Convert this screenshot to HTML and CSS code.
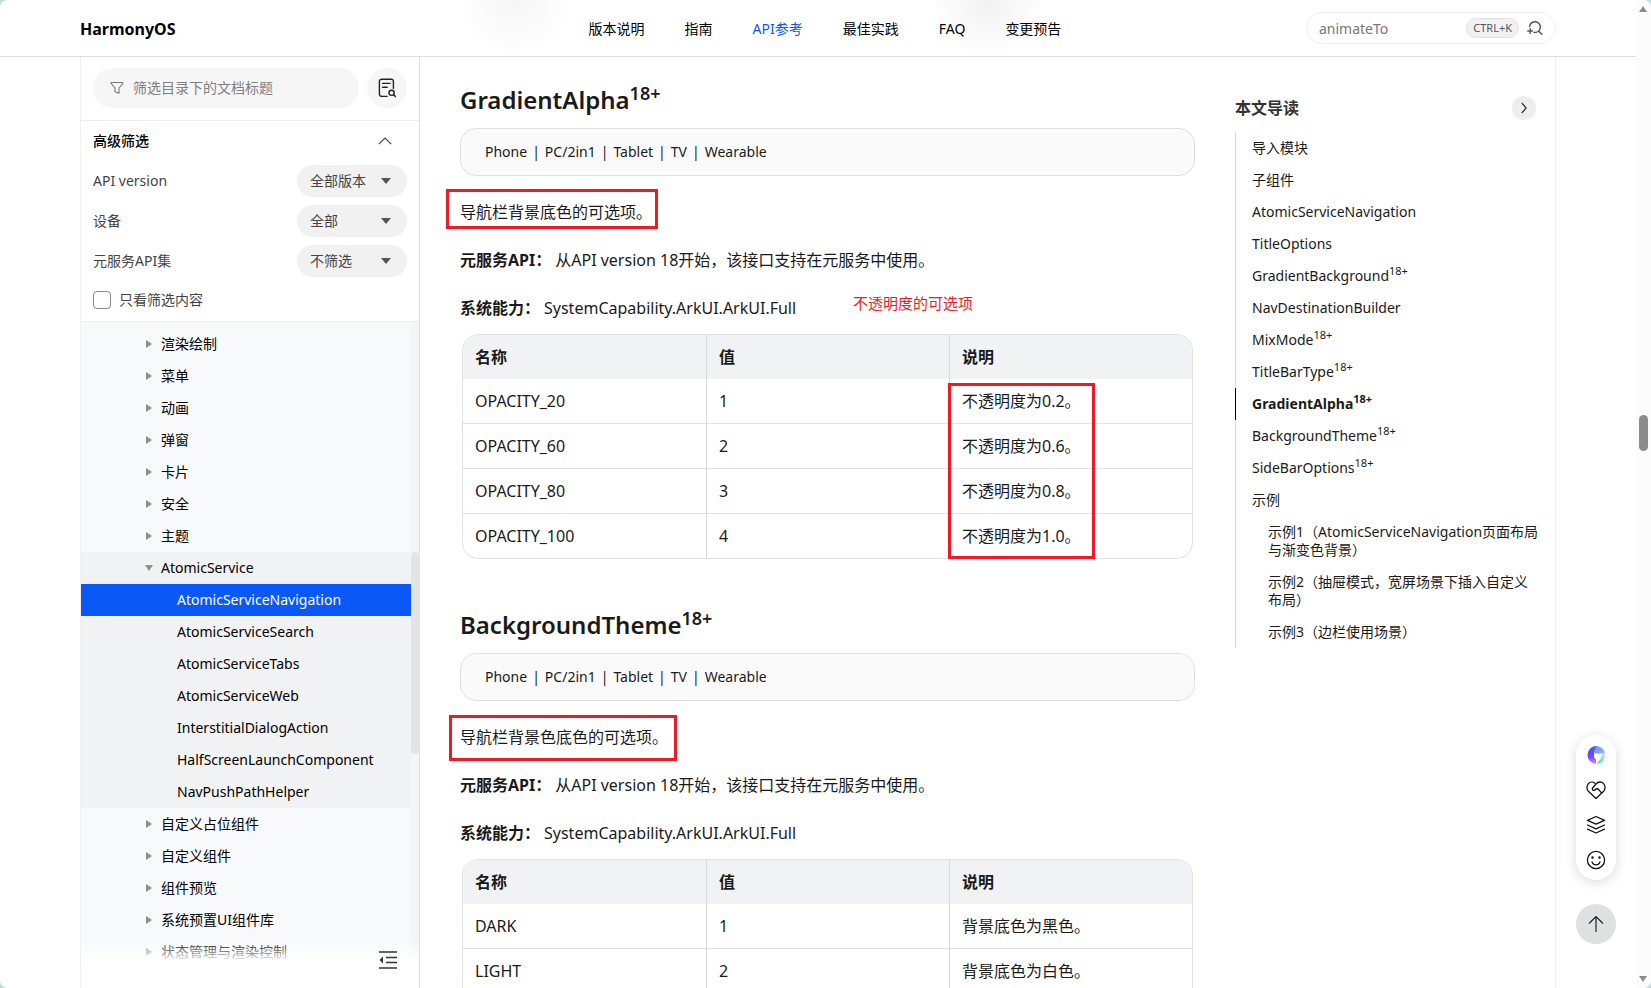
FILE: index.html
```html
<!DOCTYPE html>
<html lang="zh-CN">
<head>
  <meta charset="UTF-8">
  <title>AtomicServiceNavigation - HarmonyOS</title>
  <link rel="stylesheet" href="styles.css">
</head>
<body>
  <div class="window">
    <div class="page">
      <header class="header">
        <a class="logo" href="#">HarmonyOS</a>
        <nav class="nav">
          <a href="#">版本说明</a>
          <a href="#">指南</a>
          <a class="active" href="#">API参考</a>
          <a href="#">最佳实践</a>
          <a href="#">FAQ</a>
          <a href="#">变更预告</a>
        </nav>
        <form class="search">
          <input type="text" placeholder="animateTo" aria-label="搜索">
          <kbd>CTRL+K</kbd>
          <button type="button" aria-label="搜索">
            <svg width="16" height="16" viewBox="0 0 16 16" fill="none" stroke="#555" stroke-width="1.4" stroke-linecap="round"><path d="M2.6 6.6A5.4 5.4 0 1 1 7 12.4M11.8 11.2l3 3"/><path d="M3.2 8.6v4.8M.8 11h4.8"/></svg>
          </button>
        </form>
      </header>

      <div class="body">
        <aside class="sidebar">
          <div class="filter">
            <label class="filter-box">
              <svg width="14" height="14" viewBox="0 0 14 14" fill="none" stroke="#777" stroke-width="1.1" stroke-linejoin="round"><path d="M1.2 1.5h11.6v1L9 7v5.2l-4-1.4V7L1.2 2.5z"/></svg>
              <input type="text" placeholder="筛选目录下的文档标题" aria-label="筛选目录下的文档标题">
            </label>
            <button class="round-btn" type="button" aria-label="目录内搜索">
              <svg width="20" height="20" viewBox="0 0 20 20" fill="none" stroke="#222" stroke-width="1.4" stroke-linecap="round" stroke-linejoin="round"><path d="M10 18.4H4.6a2.2 2.2 0 0 1-2.2-2.2V3.4a2.2 2.2 0 0 1 2.2-2.2h9.6a2.2 2.2 0 0 1 2.2 2.2v7M5.6 5.4h7.4M5.6 9.2h4.6"/><circle cx="14.6" cy="14.8" r="2.6"/><path d="M16.6 16.8l1.8 1.8"/></svg>
            </button>
          </div>

          <div class="options">
            <div class="options-title">
              <b>高级筛选</b>
              <button type="button" aria-label="收起">
                <svg width="14" height="8" viewBox="0 0 14 8" fill="none" stroke="#444" stroke-width="1.2"><path d="M.8 7.2L7 1l6.2 6.2"/></svg>
              </button>
            </div>
            <div class="option">
              <label for="version">API version</label>
              <span class="select"><select id="version"><option>全部版本</option></select></span>
            </div>
            <div class="option">
              <label for="device">设备</label>
              <span class="select"><select id="device"><option>全部</option></select></span>
            </div>
            <div class="option">
              <label for="apiset">元服务API集</label>
              <span class="select"><select id="apiset"><option>不筛选</option></select></span>
            </div>
            <label class="only"><input type="checkbox">只看筛选内容</label>
          </div>

          <div class="tree">
            <ul>
              <li><a href="#">渲染绘制</a></li>
              <li><a href="#">菜单</a></li>
              <li><a href="#">动画</a></li>
              <li><a href="#">弹窗</a></li>
              <li><a href="#">卡片</a></li>
              <li><a href="#">安全</a></li>
              <li><a href="#">主题</a></li>
              <li class="open">
                <a href="#">AtomicService</a>
                <ul>
                  <li><a class="current" href="#">AtomicServiceNavigation</a></li>
                  <li><a href="#">AtomicServiceSearch</a></li>
                  <li><a href="#">AtomicServiceTabs</a></li>
                  <li><a href="#">AtomicServiceWeb</a></li>
                  <li><a href="#">InterstitialDialogAction</a></li>
                  <li><a href="#">HalfScreenLaunchComponent</a></li>
                  <li><a href="#">NavPushPathHelper</a></li>
                </ul>
              </li>
              <li><a href="#">自定义占位组件</a></li>
              <li><a href="#">自定义组件</a></li>
              <li><a href="#">组件预览</a></li>
              <li><a href="#">系统预置UI组件库</a></li>
              <li><a href="#">状态管理与渲染控制</a></li>
            </ul>
            <div class="tree-bar"><i></i></div>
          </div>
          <div class="tree-foot">
            <button type="button" aria-label="收起目录">
              <svg width="18" height="18" viewBox="0 0 18 18" fill="none" stroke="#333" stroke-width="1.4"><path d="M0 1h18M7 6.5h11M7 11.5h11M0 17h18"/><path d="M4 5.5v7L.5 9z" fill="#333" stroke="none"/></svg>
            </button>
          </div>
        </aside>

        <main class="content">
          <section>
            <h2>GradientAlpha<sup>18+</sup></h2>
            <div class="devices"><span>Phone</span><span>PC/2in1</span><span>Tablet</span><span>TV</span><span>Wearable</span></div>
            <p>导航栏背景底色的可选项。<i class="mark mark-alpha"></i></p>
            <p><b>元服务API：</b>从API version 18开始，该接口支持在元服务中使用。</p>
            <p><b>系统能力：</b>SystemCapability.ArkUI.ArkUI.Full<span class="note">不透明度的可选项</span></p>
            <div class="table">
              <table>
                <thead>
                  <tr><th>名称</th><th>值</th><th>说明</th></tr>
                </thead>
                <tbody>
                  <tr><td>OPACITY_20</td><td>1</td><td>不透明度为0.2。</td></tr>
                  <tr><td>OPACITY_60</td><td>2</td><td>不透明度为0.6。</td></tr>
                  <tr><td>OPACITY_80</td><td>3</td><td>不透明度为0.8。</td></tr>
                  <tr><td>OPACITY_100</td><td>4</td><td>不透明度为1.0。</td></tr>
                </tbody>
              </table>
              <i class="mark mark-column"></i>
            </div>
          </section>

          <section>
            <h2>BackgroundTheme<sup>18+</sup></h2>
            <div class="devices"><span>Phone</span><span>PC/2in1</span><span>Tablet</span><span>TV</span><span>Wearable</span></div>
            <p>导航栏背景色底色的可选项。<i class="mark mark-theme"></i></p>
            <p><b>元服务API：</b>从API version 18开始，该接口支持在元服务中使用。</p>
            <p><b>系统能力：</b>SystemCapability.ArkUI.ArkUI.Full</p>
            <div class="table table-cut">
              <table>
                <thead>
                  <tr><th>名称</th><th>值</th><th>说明</th></tr>
                </thead>
                <tbody>
                  <tr><td>DARK</td><td>1</td><td>背景底色为黑色。</td></tr>
                  <tr><td>LIGHT</td><td>2</td><td>背景底色为白色。</td></tr>
                </tbody>
              </table>
            </div>
          </section>
        </main>

        <aside class="toc">
          <div class="toc-title">
            <b>本文导读</b>
            <button type="button" aria-label="收起导读">
              <svg width="6" height="12" viewBox="0 0 6 12" fill="none" stroke="#333" stroke-width="1.2"><path d="M.8 1l4.4 5-4.4 5"/></svg>
            </button>
          </div>
          <ul>
            <li><a href="#">导入模块</a></li>
            <li><a href="#">子组件</a></li>
            <li><a href="#">AtomicServiceNavigation</a></li>
            <li><a href="#">TitleOptions</a></li>
            <li><a href="#">GradientBackground<sup>18+</sup></a></li>
            <li><a href="#">NavDestinationBuilder</a></li>
            <li><a href="#">MixMode<sup>18+</sup></a></li>
            <li><a href="#">TitleBarType<sup>18+</sup></a></li>
            <li class="active"><a href="#">GradientAlpha<sup>18+</sup></a></li>
            <li><a href="#">BackgroundTheme<sup>18+</sup></a></li>
            <li><a href="#">SideBarOptions<sup>18+</sup></a></li>
            <li><a href="#">示例</a></li>
            <li class="sub"><a href="#">示例1（AtomicServiceNavigation页面布局与渐变色背景）</a></li>
            <li class="sub"><a href="#">示例2（抽屉模式，宽屏场景下插入自定义布局）</a></li>
            <li class="sub"><a href="#">示例3（边栏使用场景）</a></li>
          </ul>
        </aside>
      </div>
    </div>

    <!-- 页面滚动条 -->
    <div class="scrollbar"><i class="up"></i><i class="thumb"></i><i class="down"></i></div>

    <!-- 右侧悬浮工具 -->
    <div class="float">
      <div class="tools">
        <button type="button" aria-label="智能助手">
          <svg width="20" height="20" viewBox="0 0 20 20">
            <defs>
              <linearGradient id="g1" x1="0" y1="0" x2="0" y2="1"><stop offset="0" stop-color="#4a4de8"/><stop offset=".6" stop-color="#6a4cf5"/><stop offset="1" stop-color="#e08af5"/></linearGradient>
              <linearGradient id="g2" x1="0" y1="0" x2="1" y2="1"><stop offset="0" stop-color="#6f8df5"/><stop offset="1" stop-color="#8fb4f8"/></linearGradient>
              <linearGradient id="g3" x1="0" y1="0" x2="0" y2="1"><stop offset="0" stop-color="#b9e6f5"/><stop offset="1" stop-color="#4fd0d0"/></linearGradient>
            </defs>
            <path d="M11 1a9 9 0 1 0-1 18v-4.500a3.500 3.500 0 0 1-2-3.500c0-4 1-7 3-10z" fill="url(#g1)"/>
            <path d="M10.500 1A9 9 0 0 1 19 8.500H9C8 6 8.500 3 10.500 1z" fill="url(#g2)"/>
            <path d="M15.500 9H19a9 9 0 0 1-7.500 9.900c0-3 4-3.500 4-9.900z" fill="url(#g3)"/>
          </svg>
        </button>
        <button type="button" aria-label="支持">
          <svg width="20" height="20" viewBox="0 0 20 20" fill="none" stroke="#111" stroke-width="1.300" stroke-linejoin="round" stroke-linecap="round"><path d="M8.800 3.200C6.800 1.500 4 1.900 2.400 3.600.2 6 .5 9.500 2.600 11.600L10 18.400l7.400-6.800c2.100-2.100 2.400-5.600.2-8-2-2.200-5.400-2.100-7.400.2L6.600 8c-1 1.400.8 3 2.200 1.900 1.600-1.300 2.800-1.700 4-.3l2.600 3.200"/></svg>
        </button>
        <button type="button" aria-label="版本">
          <svg width="20" height="20" viewBox="0 0 20 20" fill="none" stroke="#111" stroke-width="1.300" stroke-linejoin="round" stroke-linecap="round"><path d="M10 1.500l8.500 3.800L10 9.100 1.500 5.300zM1.500 10l8.500 3.800 8.500-3.800M1.500 14.200L10 18l8.500-3.800"/></svg>
        </button>
        <button type="button" aria-label="反馈">
          <svg width="20" height="20" viewBox="0 0 20 20" fill="none" stroke="#111" stroke-width="1.300" stroke-linecap="round"><circle cx="10" cy="10" r="8.600"/><path d="M6 12c.8 1.900 2.200 2.900 4 2.900s3.200-1 4-2.900"/><circle cx="6.500" cy="7.600" r=".6" fill="#111"/><circle cx="13.500" cy="7.600" r=".6" fill="#111"/></svg>
        </button>
      </div>
      <button class="to-top" type="button" aria-label="回到顶部">
        <svg width="16" height="18" viewBox="0 0 16 18" fill="none" stroke="#222" stroke-width="1.200"><path d="M8 17V1.500M1 8.500l7-7 7 7"/></svg>
      </button>
    </div>
  </div>
</body>
</html>
```
FILE: styles.css
```css
*{margin: 0;padding: 0;box-sizing: border-box;}
body{background: #c3dcdf;font: 14px/20px "Noto Sans","Noto Sans CJK SC",sans-serif;color: #1a1a1a;}
ul{list-style: none;}
a{color: inherit;text-decoration: none;}
button{border: none;background: none;cursor: pointer;display: flex;align-items: center;justify-content: center;}
input,select{font: inherit;color: inherit;border: none;background: none;outline: none;min-width: 0;}
svg{display: block;flex: none;}
sup{line-height: 0;}

.window{display: flex;height: 100vh;overflow: hidden;background: #fff;border-radius: 8px;position: relative;}
.page{flex: 1;min-width: 0;display: flex;flex-direction: column;}

/* 顶部导航 */
.header{height: 57px;flex: none;padding: 0 80px;display: grid;grid-template-columns: 1fr auto 1fr;align-items: center;border-bottom: 1px solid #e0e0e0;
  background: radial-gradient(circle at 515px 0,#f6f6f6,rgba(255,255,255,0) 60px),radial-gradient(circle at 988px 0,#f2f2f2,rgba(255,255,255,0) 60px);}
.logo{font-size: 16px;font-weight: 700;color: #000;padding-top: 2px;}
.nav{display: flex;gap: 40px;padding: 2px 0 0 14px;color: #000;}
.nav .active{color: #0a59f7;}
.search{justify-self: end;width: 250px;height: 32px;display: flex;align-items: center;gap: 8px;padding: 0 12px;border: 1px solid #eee;border-radius: 16px;background: #fff;}
.search input{flex: 1;padding-top: 2px;}
.search input::placeholder{color: #777;opacity: 1;}
.search kbd{flex: none;font: 11px/18px "Noto Sans",sans-serif;color: #555;padding: 0 6px;border: 1px solid #e2e2e2;border-radius: 10px;background: #f1f1f1;}

.body{flex: 1;min-height: 0;display: flex;margin: 0 80px;border: solid #f0f0f0;border-width: 0 1px;}

/* 左侧目录 */
.sidebar{width: 339px;flex: none;display: flex;flex-direction: column;border-right: 1px solid #e0e0e0;position: relative;}
.filter{display: flex;gap: 8px;padding: 11px 12px 12px;border-bottom: 1px solid #eee;}
.filter-box{flex: 1;height: 40px;display: flex;align-items: center;gap: 9px;padding: 0 17px;border-radius: 20px;background: #f6f6f6;}
.filter-box input{flex: 1;}
.filter-box input::placeholder{color: #808080;opacity: 1;}
.round-btn{width: 40px;height: 40px;border-radius: 50%;background: #f6f6f6;}
.options{padding: 0 12px 6px;border-bottom: 1px solid #eee;color: #444;display: flex;flex-direction: column;gap: 8px;}
.options-title{display: flex;justify-content: space-between;align-items: center;height: 36px;padding: 4px 15px 0 0;color: #000;}
.options-title b{font-weight: 500;}
.option{display: flex;justify-content: space-between;align-items: center;}
.select{position: relative;width: 110px;}
.select select{appearance: none;width: 100%;height: 32px;display: block;padding: 0 28px 0 13px;border-radius: 16px;background: #f1f1f1;}
.select::after{content: "";position: absolute;right: 16px;top: 13px;border: solid transparent;border-width: 6px 5px 0;border-top-color: #555;pointer-events: none;}
.only{display: flex;align-items: center;gap: 8px;height: 30px;}
.only input{appearance: none;width: 18px;height: 18px;border: 1px solid #888;border-radius: 4px;background: #fff;}

.tree{flex: 1;min-height: 0;overflow: hidden;display: flex;color: #000;}
.tree > ul{flex: 1;padding-top: 6px;background: #f8f9fb;}
.tree a{display: flex;align-items: center;gap: 9px;height: 32px;padding-left: 65px;}
.tree a::before{content: "";border: solid transparent;border-width: 4px 0 4px 6px;border-left-color: #8e8f90;}
.tree .open{background: #f1f2f4;}
.tree .open > a{gap: 8px;padding-left: 64px;}
.tree .open > a::before{border-width: 6px 4px 0;border-color: #8e8f90 transparent;}
.tree ul ul a{padding-left: 96px;}
.tree ul ul a::before{display: none;}
.tree ul ul .current{background: #0a59f7;color: #fff;}
.tree-bar{width: 8px;background: #f5f5f5;position: relative;}
.tree-bar i{position: absolute;left: 0;top: 230px;width: 8px;height: 202px;border-radius: 4px;background: #e4e4e4;}
.tree-foot{position: absolute;left: 0;right: 0;bottom: 0;height: 48px;display: flex;justify-content: flex-end;align-items: flex-start;padding: 11px 22px 0;background: linear-gradient(rgba(255,255,255,0),#fff 22px);}

/* 正文 */
.content{flex: 1;min-width: 0;overflow: hidden;padding: 0 40px;font-size: 16px;line-height: 24px;}
.content section{padding-top: 27px;margin-bottom: 23px;}
.content h2{font-size: 24px;line-height: 32px;font-weight: 600;margin-bottom: 12px;}
.content h2 sup{font-size: 18px;}
.devices{display: flex;align-items: center;height: 48px;padding: 0 24px;margin-bottom: 24px;border: 1px solid #e0e0e0;border-radius: 16px;background: #fafafa;font-size: 14px;}
.devices span + span::before{content: "|";margin: 0 5px;}
.content p{position: relative;margin-bottom: 24px;}
.content p b{margin-right: 4px;}
.table{position: relative;margin: -10px 2px 0;border: 1px solid #e0e1e3;border-radius: 16px;}
.table-cut{border-radius: 16px 16px 0 0;}
table{width: 100%;table-layout: fixed;border-spacing: 0;}
th,td{height: 45px;padding: 0 12px;text-align: left;border-bottom: 1px solid #e0e1e3;}
th{height: 44px;background: #f1f2f4;border-bottom: none;}
th:first-child{border-top-left-radius: 15px;}
th:last-child{border-top-right-radius: 15px;}
th + th,td + td{border-left: 1px solid #d8d9db;}
tr:last-child td{height: 44px;border-bottom: none;}

/* 红色标注 */
.mark{position: absolute;border: 3px solid #ed1c24;}
.mark-alpha{left: -14px;top: -11px;width: 212px;height: 40px;}
.mark-theme{left: -11px;top: -10px;width: 228px;height: 46px;}
.mark-column{left: calc(66.66% - 1px);top: 48px;width: 147px;height: 176px;}
.note{position: absolute;left: 393px;top: -5px;font-size: 15px;color: #ed1c24;}

/* 本文导读 */
.toc{width: 320px;flex: none;padding: 39px 15px 0 0;}
.toc-title{display: flex;justify-content: space-between;align-items: center;font-size: 16px;line-height: 24px;padding-right: 4px;margin-bottom: 12px;color: #333;}
.toc-title button{width: 24px;height: 24px;border-radius: 50%;background: #eee;}
.toc li{padding: 7px 0 7px 16px;line-height: 18px;border-left: 1px solid #d8d8d8;}
.toc sup{font-size: 11px;}
.toc .active{border-color: #000;font-weight: 700;}
.toc .sub{padding-left: 32px;}

.scrollbar{width: 15px;flex: none;background: #fcfcfc;position: relative;}
.scrollbar i{position: absolute;left: 3px;}
.scrollbar .up{top: 6px;border: solid transparent;border-width: 0 4px 6px;border-bottom-color: #8b8b8b;}
.scrollbar .down{bottom: 6px;border: solid transparent;border-width: 6px 4px 0;border-top-color: #8b8b8b;}
.scrollbar .thumb{top: 42%;width: 9px;height: 36px;border-radius: 5px;background: #8b8b8b;}

.float{position: fixed;right: 35px;bottom: 44px;display: flex;flex-direction: column;gap: 24px;}
.tools{width: 40px;padding: 10px 0;display: flex;flex-direction: column;align-items: center;gap: 15px;border-radius: 20px;background: #fff;box-shadow: 0 2px 12px rgba(0,0,0,.15);}
.to-top{width: 40px;height: 40px;border-radius: 50%;background: #dfe0e2;}
```
